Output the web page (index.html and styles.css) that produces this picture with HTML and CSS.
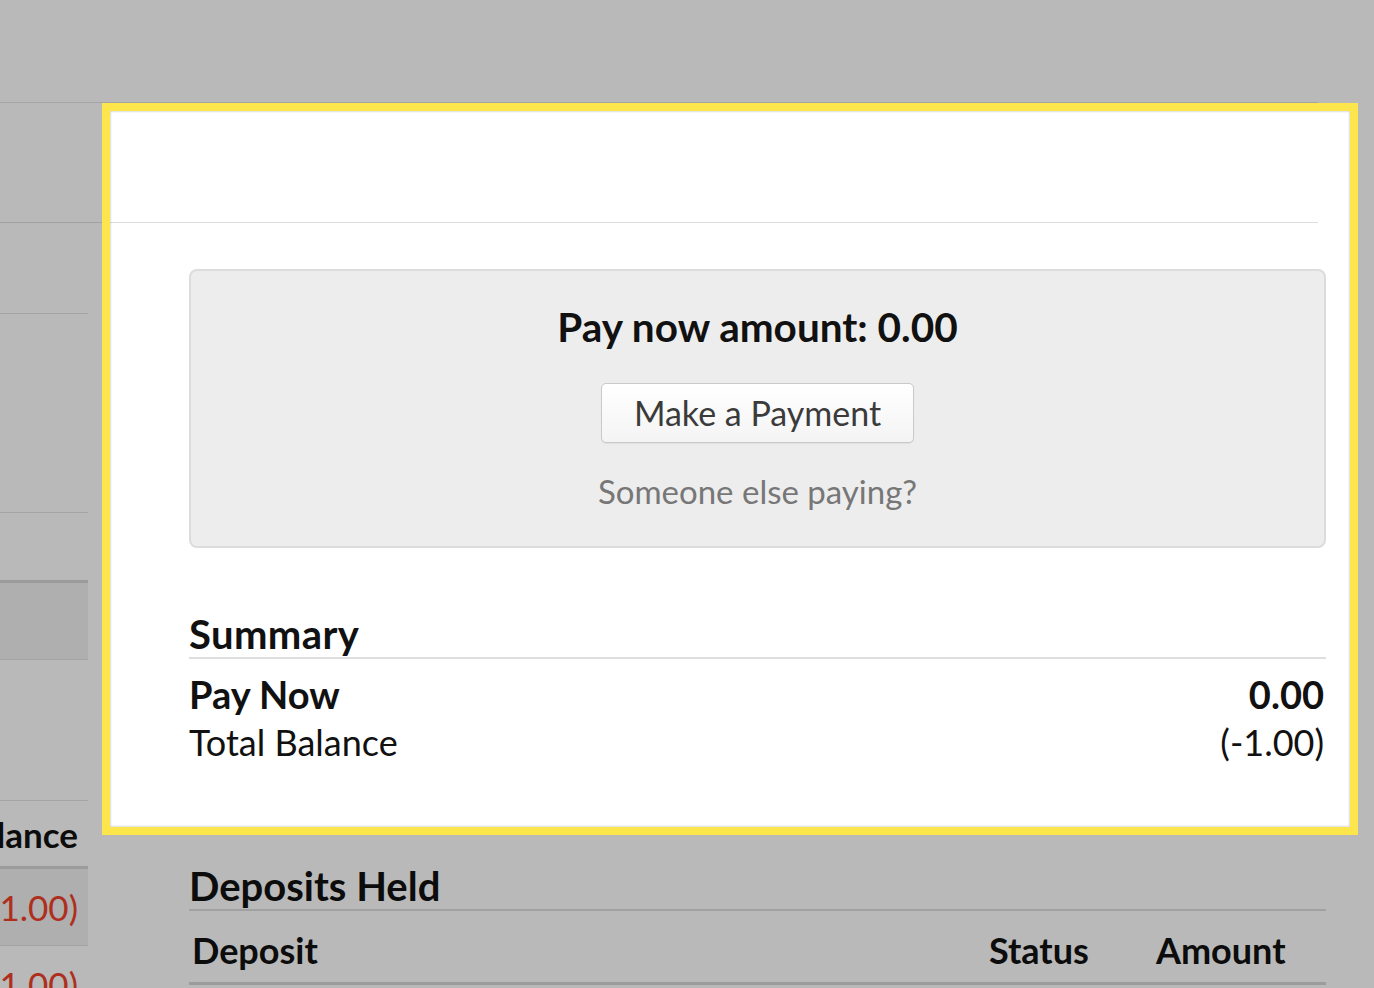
FILE: index.html
```html
<!DOCTYPE html>
<html lang="en">
<head>
  <meta charset="UTF-8" />
  <meta name="viewport" content="width=device-width, initial-scale=1.0" />
  <title>Account Balance</title>
  <link rel="stylesheet" href="styles.css">
</head>
<body>
  <div class="topbar"></div>
  <div class="subbar"></div>

  <div class="layout">
    <div class="ledger">
      <div class="ledger-row r1"></div>
      <div class="ledger-row r2"></div>
      <div class="ledger-row r3"></div>
      <div class="ledger-row shaded r4"></div>
      <div class="ledger-gap"></div>
      <div class="ledger-head">Balance</div>
      <div class="ledger-row shaded money">(-1.00)</div>
      <div class="ledger-row money">(-1.00)</div>
    </div>

    <main class="content">
      <div class="pay-box">
        <h2 class="pay-title">Pay now amount: 0.00</h2>
        <button class="pay-button">Make a Payment</button>
        <div class="pay-other">Someone else paying?</div>
      </div>

      <h3 class="section-title">Summary</h3>
      <div class="summary">
        <div class="summary-row strong"><span>Pay Now</span><span>0.00</span></div>
        <div class="summary-row"><span>Total Balance</span><span>(-1.00)</span></div>
      </div>

      <h3 class="section-title deposits-title">Deposits Held</h3>
      <div class="deposit-head">
        <span>Deposit</span>
        <span>Status</span>
        <span>Amount</span>
      </div>
    </main>
  </div>

  <!-- tour highlight: dims the page except this box -->
  <div class="tour-highlight"></div>
</body>
</html>
```

FILE: styles.css
```css
html, body {
  overflow: hidden;
}
body {
  margin: 0;
  background: #fff;
  color: #111;
  font-family: Lato, "Open Sans", sans-serif;
}
.topbar {
  width: 1318px;
  height: 102px;
  border-bottom: 1px solid #e4e4e4;
}
.subbar {
  width: 1318px;
  height: 119px;
  border-bottom: 1px solid #dedede;
}
.layout {
  display: flex;
}

/* left table, mostly scrolled off screen */
.ledger {
  width: 390px;
  margin-left: -302px;
  flex-shrink: 0;
  font-size: 35px;
  text-align: right;
}
.ledger-row {
  border-bottom: 1px solid #e2e2e2;
  padding: 15px 10px 15px 0;
  line-height: 46px;
  box-sizing: border-box;
}
.r1 { height: 91px; }
.r2 { height: 199px; }
.r3 { height: 70px; border-bottom: 3px solid #d6d6d6; }
.r4 { height: 77px; }
.shaded {
  background: #f1f1f1;
}
.ledger-gap {
  height: 141px;
  border-bottom: 1px solid #e2e2e2;
  box-sizing: border-box;
}
.ledger-head {
  font-weight: bold;
  line-height: 46px;
  padding: 10px 10px 9px 0;
  border-bottom: 3px solid #d6d6d6;
}
.money {
  color: #f04128;
  height: 77px;
}

.content {
  width: 1137px;
  margin-left: 101px;
  flex-shrink: 0;
}
.pay-box {
  margin-top: 46px;
  background: #ededed;
  border: 2px solid #dcdcdc;
  border-radius: 8px;
  padding: 32px 0 35px;
  text-align: center;
}
.pay-title {
  margin: 0;
  font-size: 40.5px;
  line-height: 48px;
  font-weight: bold;
}
.pay-button {
  margin-top: 32px;
  height: 60px;
  padding: 0 32px;
  font-family: inherit;
  font-size: 34px;
  line-height: 58px;
  color: #3b3b3b;
  background: linear-gradient(#fff, #f4f4f4);
  border: 1px solid #c9c9c9;
  border-radius: 5px;
  box-shadow: 0 1px 1px rgba(0, 0, 0, 0.06);
}
.pay-other {
  margin-top: 28px;
  font-size: 33px;
  line-height: 40px;
  color: #777;
}

.section-title {
  margin: 64px 0 0;
  font-size: 40px;
  line-height: 44px;
  font-weight: bold;
  letter-spacing: 0.4px;
  padding-bottom: 1px;
  border-bottom: 2px solid #dedede;
}
.summary {
  margin-top: 10px;
}
.summary-row {
  display: flex;
  justify-content: space-between;
  font-size: 36px;
  line-height: 47px;
  padding-right: 2px;
}
.summary-row.strong {
  font-size: 38px;
  line-height: 50px;
  font-weight: bold;
}
.deposits-title {
  margin-top: 98px;
  padding-bottom: 1px;
  letter-spacing: 0;
}
.deposit-head {
  display: grid;
  grid-template-columns: 797px 167px 173px;
  margin-top: 16px;
  font-size: 36px;
  line-height: 46px;
  font-weight: bold;
  padding-bottom: 9px;
  border-bottom: 3px solid #d8d8d8;
}
.deposit-head span {
  padding-left: 3px;
}

.tour-highlight {
  position: absolute;
  left: 102px;
  top: 103px;
  width: 1256px;
  height: 732px;
  box-sizing: border-box;
  border: 8px solid #fde64b;
  box-shadow: inset 0 0 2px 1px rgba(0, 0, 0, 0.14), 0 0 0 3000px rgba(0, 0, 0, 0.275);
  pointer-events: none;
}
```
